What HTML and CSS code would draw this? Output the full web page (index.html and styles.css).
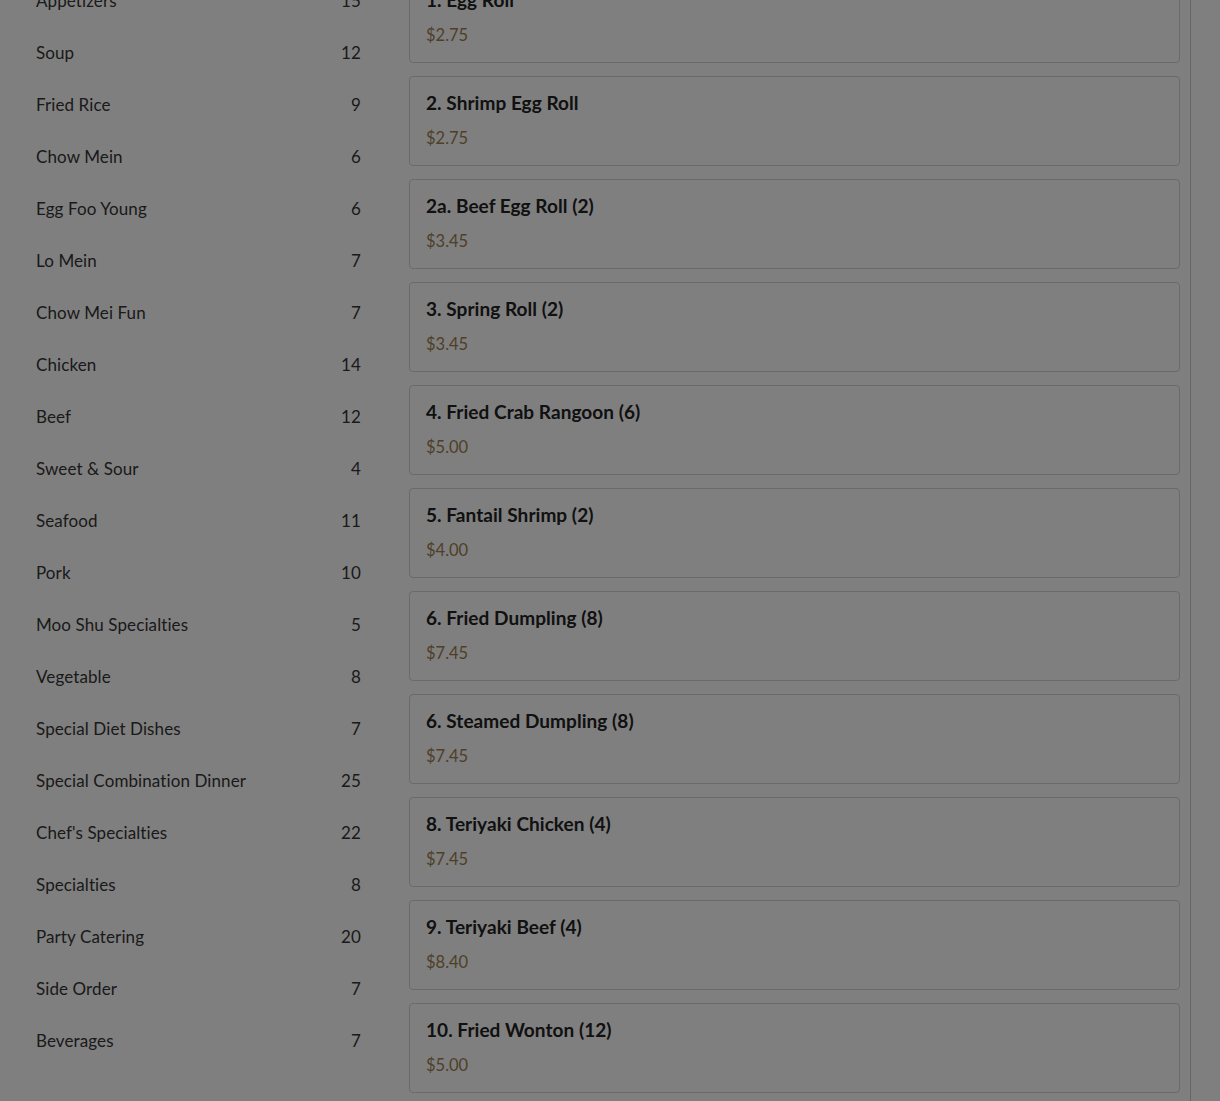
FILE: index.html
```html
<!DOCTYPE html>
<html lang="en">
<head>
<meta charset="utf-8">
<title>Menu</title>
<link rel="stylesheet" href="styles.css">
</head>
<body>
<div class="page">
  <aside class="sidebar">
    <ul class="cats">
      <li class="cat"><span>Appetizers</span><span>15</span></li>
      <li class="cat"><span>Soup</span><span>12</span></li>
      <li class="cat"><span>Fried Rice</span><span>9</span></li>
      <li class="cat"><span>Chow Mein</span><span>6</span></li>
      <li class="cat"><span>Egg Foo Young</span><span>6</span></li>
      <li class="cat"><span>Lo Mein</span><span>7</span></li>
      <li class="cat"><span>Chow Mei Fun</span><span>7</span></li>
      <li class="cat"><span>Chicken</span><span>14</span></li>
      <li class="cat"><span>Beef</span><span>12</span></li>
      <li class="cat"><span>Sweet &amp; Sour</span><span>4</span></li>
      <li class="cat"><span>Seafood</span><span>11</span></li>
      <li class="cat"><span>Pork</span><span>10</span></li>
      <li class="cat"><span>Moo Shu Specialties</span><span>5</span></li>
      <li class="cat"><span>Vegetable</span><span>8</span></li>
      <li class="cat"><span>Special Diet Dishes</span><span>7</span></li>
      <li class="cat"><span>Special Combination Dinner</span><span>25</span></li>
      <li class="cat"><span>Chef's Specialties</span><span>22</span></li>
      <li class="cat"><span>Specialties</span><span>8</span></li>
      <li class="cat"><span>Party Catering</span><span>20</span></li>
      <li class="cat"><span>Side Order</span><span>7</span></li>
      <li class="cat"><span>Beverages</span><span>7</span></li>
    </ul>
  </aside>
  <main class="main">
    <div class="items">
      <div class="card"><div class="title">1. Egg Roll</div><div class="price">$2.75</div></div>
      <div class="card"><div class="title">2. Shrimp Egg Roll</div><div class="price">$2.75</div></div>
      <div class="card"><div class="title">2a. Beef Egg Roll (2)</div><div class="price">$3.45</div></div>
      <div class="card"><div class="title">3. Spring Roll (2)</div><div class="price">$3.45</div></div>
      <div class="card"><div class="title">4. Fried Crab Rangoon (6)</div><div class="price">$5.00</div></div>
      <div class="card"><div class="title">5. Fantail Shrimp (2)</div><div class="price">$4.00</div></div>
      <div class="card"><div class="title">6. Fried Dumpling (8)</div><div class="price">$7.45</div></div>
      <div class="card"><div class="title">6. Steamed Dumpling (8)</div><div class="price">$7.45</div></div>
      <div class="card"><div class="title">8. Teriyaki Chicken (4)</div><div class="price">$7.45</div></div>
      <div class="card"><div class="title">9. Teriyaki Beef (4)</div><div class="price">$8.40</div></div>
      <div class="card"><div class="title">10. Fried Wonton (12)</div><div class="price">$5.00</div></div>
      <div class="card"><div class="title">11. Boneless Spare Ribs</div><div class="price">$8.95</div></div>
    </div>
  </main>
</div>
<div class="overlay"></div>
</body>
</html>
```
FILE: styles.css
```css
html, body {
  margin: 0;
  padding: 0;
  height: 100%;
  overflow: hidden;
  background: #ffffff;
  font-family: "Lato", "Noto Sans", "Liberation Sans", sans-serif;
  color: #343434;
}

.page {
  display: flex;
  align-items: flex-start;
  gap: 48px;
  padding-left: 36px;
}

.sidebar {
  width: 325px;
  flex: none;
  margin-top: -26px;
}

.cats {
  list-style: none;
  margin: 0;
  padding: 0;
}

.cat {
  height: 52px;
  display: flex;
  align-items: center;
  justify-content: space-between;
  font-size: 17px;
  letter-spacing: 0.1px;
  color: #353535;
}

.main {
  width: 771px;
  flex: none;
  padding-right: 10px;
  border-right: 1px solid #cdcdcd;
  margin-top: -27px;
  min-height: 1200px;
}

.items {
  display: flex;
  flex-direction: column;
  gap: 13px;
}

.card {
  border: 1px solid #d4d4d4;
  border-radius: 4px;
  padding: 16px 16px;
  height: 56px;
}

.title {
  font-size: 19px;
  line-height: 20px;
  font-weight: 700;
  letter-spacing: 0.05px;
  color: #222222;
}

.price {
  margin-top: 14px;
  font-size: 16.5px;
  line-height: 22px;
  color: #9c7f50;
}

.overlay {
  position: fixed;
  inset: 0;
  background: rgba(0, 0, 0, 0.5);
}
```
